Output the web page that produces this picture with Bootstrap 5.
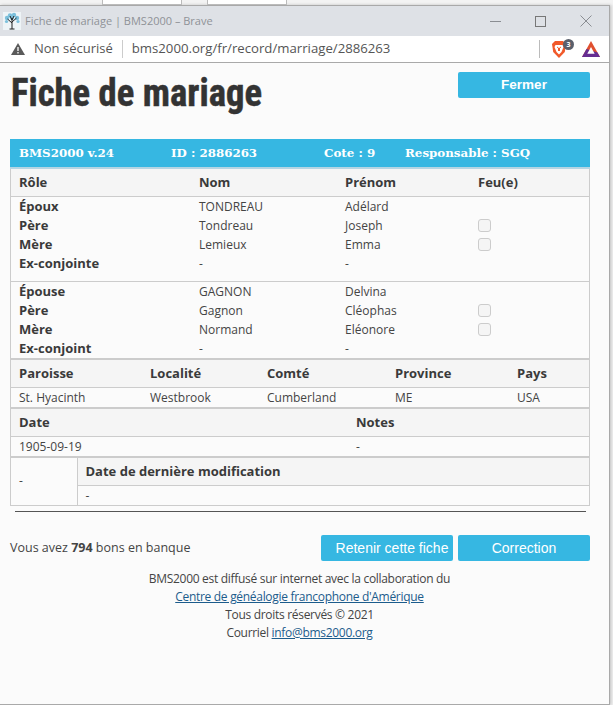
<!DOCTYPE html>
<html lang="fr">
<head>
<meta charset="utf-8">
<title>Fiche de mariage | BMS2000 – Brave</title>
<link href="https://cdn.jsdelivr.net/npm/bootstrap@5.3.0/dist/css/bootstrap.min.css" rel="stylesheet">
<style>
html,body{height:100%;}
body{background:#f0f0f0;font-family:"Open Sans","Noto Sans",sans-serif;font-size:12px;color:#444;overflow:hidden;}
.tabstrip{height:5px;padding-left:102px;background:#f3f3f3;}
.bgtab{width:80px;height:5px;border:1px solid #bbb;border-top:0;background:#fff;}
.bgtab2{width:80px;margin-left:25px;}
.win{width:610px;height:700px;border:1px solid #a9a9a9;border-left:0;background:#fbfbfb;box-shadow:1px 0 3px rgba(0,0,0,.2);}
.titlebar{height:30px;background:#dee1e6;color:#8f9297;font-size:11px;padding-left:3px;}
.titletext{margin-left:4px;}
.winctl{gap:34px;padding-right:17px;}
.addr{height:27px;background:#fff;border-bottom:1px solid #a9a9a9;color:#555;font-size:13px;padding:0 9px 0 11px;}
.nonsec{margin-left:9px;}
.addrsep{width:1px;height:18px;background:#ccc;margin:0 9px;}
.addrurl{font-size:13.2px;}
.addrend{width:1px;height:18px;background:#bbb;margin-right:11px;}
.braveicon{position:relative;width:20px;height:20px;margin-right:11px;}
.bravebadge{position:absolute;right:-3px;top:0;width:11px;height:11px;border-radius:50%;background:#5a5f6b;color:#fff;font-size:7px;line-height:11px;text-align:center;font-weight:700;}
.pagebody{padding:0 19px 0 10px;}
.headrow{height:76px;}
.pagetitle{font-family:"Liberation Sans Narrow","Roboto Condensed","Liberation Sans",sans-serif;font-weight:700;font-size:38px;line-height:1;color:#333;margin:11px 0 0 1px;-webkit-text-stroke:.5px #333;transform:scaleX(.965);transform-origin:left center;}
.bleu{background:#36b7e2;border:0;border-radius:2px;color:#fff;width:132px;height:26px;padding:0;font-family:"Liberation Sans",Arial,sans-serif;font-size:14px;line-height:26px;}
.bleu:hover{background:#36b7e2;color:#fff;}
.fermer{font-weight:700;font-size:13.5px;margin-top:9px;}
.retenir{padding-left:10px;}
.fiche{border:1px solid #ccc;border-top:0;}
.bandeau{height:28px;background:#36b7e2;border-bottom:2px solid #b5d5e3;box-sizing:content-box;color:#fff;font-family:"DejaVu Serif",serif;font-weight:700;font-size:11.85px;line-height:28px;margin:0 -1px;padding-left:9px;}
.b1{width:152px;}.b2{width:153px;}.b3{width:81px;}
.grille{table-layout:fixed;margin:0;color:#444;--bs-table-bg:transparent;font-size:12px;}
.grille th,.grille td{padding:0 8px;border:0;vertical-align:middle;}
.grille th,.lbl{font-weight:700;color:#3a3a3a;font-size:13px;}
.hdr th{background:#f5f5f5;height:27px;}
.haut th{height:28px;}
.hdr{border-bottom:1px solid #ccc;}
.ligne td{height:19px;line-height:19px;}
.finbloc{border-bottom:1px solid #ccc;}
.sep2{border-bottom:2px solid #ccc;}
.vide td{height:9px;}
.c1{width:180px;}.c2{width:146px;}.c3{width:133px;}
.d1{width:131px;}.d2{width:117px;}.d3{width:128px;}.d4{width:122px;}
.e1{width:337px;}
.f1{width:66px;border-right:1px solid #ccc !important;}
.caseb{display:block;width:13px;height:13px;margin:0;border:1px solid #ccc;border-radius:2px;background:#f5f5f5;opacity:1 !important;}
.regle{height:1px;background:#555;opacity:1;margin:5px 4px 0 5px;border:0;}
.actions{margin-top:23px;}
.bons{padding-top:4px;font-size:12.5px;color:#444;}
.btns{gap:5px;}
.pied{margin-top:9px;line-height:18px;color:#444;text-align:center;letter-spacing:-.3px;padding-right:1px;}
.pied a{color:#1c5c8c;}
</style>
</head>
<body>
<div class="tabstrip d-flex">
  <div class="bgtab"></div>
  <div class="bgtab bgtab2"></div>
</div>
<div class="win d-flex flex-column">
  <div class="titlebar d-flex align-items-center justify-content-between">
    <div class="d-flex align-items-center">
      <svg width="18" height="18" viewBox="0 0 18 18"><rect width="18" height="18" fill="#eef4f7"/><g fill="#7cc0dc"><circle cx="4" cy="6" r="2.2"/><circle cx="7" cy="3.5" r="2.2"/><circle cx="11" cy="3" r="2.2"/><circle cx="14" cy="6" r="2.2"/><circle cx="3.5" cy="9.5" r="1.6"/><circle cx="15" cy="9.5" r="1.6"/><circle cx="9" cy="6" r="2"/></g><path d="M9 17V6M9 11L4.500 7M9 10l4.500-4M9 8L7 4M9 8l2-4" stroke="#222" stroke-width="1" fill="none"/><path d="M6.500 17h5" stroke="#222" stroke-width="1"/></svg>
      <span class="titletext">Fiche de mariage | BMS2000 – Brave</span>
    </div>
    <div class="d-flex align-items-center winctl">
      <svg width="11" height="11" viewBox="0 0 11 11"><path d="M0 5.500h11" stroke="#8a8d92"/></svg>
      <svg width="11" height="11" viewBox="0 0 11 11"><rect x=".5" y=".5" width="10" height="10" fill="none" stroke="#777"/></svg>
      <svg width="12" height="12" viewBox="0 0 12 12"><path d="M.5.5l11 11M11.500.5l-11 11" stroke="#8a8d92"/></svg>
    </div>
  </div>
  <div class="addr d-flex align-items-center">
    <svg width="14" height="12" viewBox="0 0 14 12"><path d="M7 0l7 12H0z" fill="#5a5a5a"/><path d="M7 4v4M7 9v1.600" stroke="#fff" stroke-width="1.300"/></svg>
    <span class="nonsec">Non sécurisé</span>
    <span class="addrsep"></span>
    <span class="flex-grow-1 addrurl">bms2000.org/fr/record/marriage/2886263</span>
    <span class="addrend"></span>
    <span class="braveicon">
      <svg width="16" height="19" viewBox="0 0 16 19"><path d="M4 1h8l3 3-1.200 8L8 18 2.200 12 1 4z" fill="#f1592a"/><path d="M4.500 5h7l1 2-2 5-2.500 2.500L5.500 12l-2-5z" fill="#fff"/><path d="M6 7l1.500 1V11M10 7L8.500 8V11" stroke="#f1592a" stroke-width="1" fill="none"/></svg>
      <span class="bravebadge">3</span>
    </span>
    <svg width="18" height="16" viewBox="0 0 18 16"><path d="M9 0l9 16H0z" fill="#e0502f"/><path d="M4.500 8L0 16h18l-2.500-4.500z" fill="#662d91"/><path d="M9 6l3.700 6.700H5.300z" fill="#fff"/></svg>
  </div>
  <main class="pagebody flex-grow-1">
    <div class="headrow d-flex justify-content-between align-items-start">
      <h1 class="pagetitle">Fiche de mariage</h1>
      <button type="button" class="btn bleu fermer">Fermer</button>
    </div>
    <div class="fiche">
      <div class="bandeau d-flex">
        <span class="b1">BMS2000 v.24</span><span class="b2">ID : 2886263</span><span class="b3">Cote : 9</span><span>Responsable : SGQ</span>
      </div>
      <table class="table grille">
        <colgroup><col class="c1"><col class="c2"><col class="c3"><col></colgroup>
        <thead><tr class="hdr"><th>Rôle</th><th>Nom</th><th>Prénom</th><th>Feu(e)</th></tr></thead>
        <tbody>
          <tr class="ligne"><td class="lbl">Époux</td><td>TONDREAU</td><td>Adélard</td><td></td></tr>
          <tr class="ligne"><td class="lbl">Père</td><td>Tondreau</td><td>Joseph</td><td><input class="form-check-input caseb" type="checkbox" disabled aria-label="Feu"></td></tr>
          <tr class="ligne"><td class="lbl">Mère</td><td>Lemieux</td><td>Emma</td><td><input class="form-check-input caseb" type="checkbox" disabled aria-label="Feu"></td></tr>
          <tr class="ligne"><td class="lbl">Ex-conjointe</td><td>-</td><td>-</td><td></td></tr>
          <tr class="vide finbloc"><td colspan="4"></td></tr>
          <tr class="ligne"><td class="lbl">Épouse</td><td>GAGNON</td><td>Delvina</td><td></td></tr>
          <tr class="ligne"><td class="lbl">Père</td><td>Gagnon</td><td>Cléophas</td><td><input class="form-check-input caseb" type="checkbox" disabled aria-label="Feu"></td></tr>
          <tr class="ligne"><td class="lbl">Mère</td><td>Normand</td><td>Eléonore</td><td><input class="form-check-input caseb" type="checkbox" disabled aria-label="Feu"></td></tr>
          <tr class="ligne sep2"><td class="lbl">Ex-conjoint</td><td>-</td><td>-</td><td></td></tr>
        </tbody>
      </table>
      <table class="table grille">
        <colgroup><col class="d1"><col class="d2"><col class="d3"><col class="d4"><col></colgroup>
        <thead><tr class="hdr"><th>Paroisse</th><th>Localité</th><th>Comté</th><th>Province</th><th>Pays</th></tr></thead>
        <tbody><tr class="ligne sep2"><td>St. Hyacinth</td><td>Westbrook</td><td>Cumberland</td><td>ME</td><td>USA</td></tr></tbody>
      </table>
      <table class="table grille">
        <colgroup><col class="e1"><col></colgroup>
        <thead><tr class="hdr haut"><th>Date</th><th>Notes</th></tr></thead>
        <tbody><tr class="ligne sep2"><td>1905-09-19</td><td>-</td></tr></tbody>
      </table>
      <table class="table grille">
        <colgroup><col class="f1"><col></colgroup>
        <tbody>
          <tr class="hdr"><td rowspan="2" class="f1">-</td><th>Date de dernière modification</th></tr>
          <tr class="ligne"><td>-</td></tr>
        </tbody>
      </table>
    </div>
    <hr class="regle">
    <div class="actions d-flex justify-content-between align-items-start">
      <div class="bons">Vous avez <strong>794</strong> bons en banque</div>
      <div class="btns d-flex">
        <button type="button" class="btn bleu retenir">Retenir cette fiche</button>
        <button type="button" class="btn bleu">Correction</button>
      </div>
    </div>
    <div class="pied">
      <div>BMS2000 est diffusé sur internet avec la collaboration du</div>
      <div><a href="#">Centre de généalogie francophone d'Amérique</a></div>
      <div>Tous droits réservés © 2021</div>
      <div>Courriel <a href="#">info@bms2000.org</a></div>
    </div>
  </main>
</div>
<script src="https://cdn.jsdelivr.net/npm/bootstrap@5.3.0/dist/js/bootstrap.bundle.min.js"></script>
</body>
</html>
